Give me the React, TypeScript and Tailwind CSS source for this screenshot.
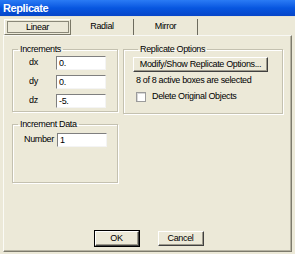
const font = "font-['Liberation_Sans',Arial,sans-serif]";
const txt = 'text-[9px] tracking-[-0.35px] text-black';

function Field({ value }: { value: string }) {
  return (
    <div
      className={`w-[50px] h-[14px] bg-white border-t border-l border-t-[#7f7f7f] border-l-[#7f7f7f] border-b border-r border-b-[#f4f4f4] border-r-[#f4f4f4] leading-[12px] pl-[2px] ${txt}`}
    >
      {value}
    </div>
  );
}

function Group({
  title,
  className,
  children,
}: {
  title: string;
  className: string;
  children: React.ReactNode;
}) {
  return (
    <fieldset
      className={`border border-[#c4c1b0] shadow-[inset_1px_1px_0_#fff,1px_1px_0_#fff] ${className}`}
    >
      <legend className={`ml-[5px] px-[2px] leading-[10px] whitespace-nowrap ${txt}`}>{title}</legend>
      {children}
    </fieldset>
  );
}

function Button({ label, className }: { label: string; className: string }) {
  return (
    <div
      className={`h-[15px] flex items-center justify-center whitespace-nowrap border border-t-white border-l-white border-b-[#404040] border-r-[#404040] shadow-[inset_-1px_-1px_0_#9d9a8c] bg-[#ECE9D8] ${txt} ${className}`}
    >
      {label}
    </div>
  );
}

export default function App() {
  return (
    <div className={`w-[295px] h-[254px] bg-[#ECE9D8] flex flex-col ${font}`}>
      {/* title bar */}
      <div className="h-[16px] bg-gradient-to-b from-[#2a7bf5] via-[#0756e0] to-[#0645c8] flex items-center pl-[3px]">
        <span className="text-white font-bold text-[11px] tracking-[-0.4px] leading-none">Replicate</span>
      </div>
      <div className="h-px bg-[#e4e2d4]" />

      {/* tabs */}
      <div className="flex pl-[4px] mt-[2px] h-[16px] items-stretch">
        <div className={`w-[67px] border border-t-white border-l-white border-b-[#7a7867] border-r-[#7a7867] bg-[#ECE9D8] flex items-center justify-center ${txt}`}>
          <div className="w-[62px] h-[12px] border border-[#8a8878] flex items-center justify-center leading-none">
            Linear
          </div>
        </div>
        <div className={`w-[63px] flex items-center justify-center border-r border-r-[#6d6b5e] ${txt}`}>
          Radial
        </div>
        <div className={`w-[64px] flex items-center justify-center border-r border-r-[#6d6b5e] ${txt}`}>
          Mirror
        </div>
      </div>

      {/* panel */}
      <div className="flex-1 mx-[3px] mb-[2px] border border-t-[#f8f8f4] border-l-[#fbfbf6] border-r-[#7c7a6c] border-b-[#7c7a6c] shadow-[inset_-1px_-1px_0_#b6b3a2] flex flex-col pt-[8px]">
        <div className="flex gap-[5px] pl-[8px]">
          <div className="flex flex-col">
            <Group title="Increments" className="w-[106px] h-[68px] pt-[2px]">
              <div className="flex flex-col gap-[5px]">
                {[
                  ['dx', '0.'],
                  ['dy', '0.'],
                  ['dz', '-5.'],
                ].map(([l, v]) => (
                  <div key={l} className="flex items-center">
                    <span className={`w-[43px] pl-[16px] ${txt}`}>{l}</span>
                    <Field value={v} />
                  </div>
                ))}
              </div>
            </Group>
            <Group title="Increment Data" className="w-[106px] h-[64px] mt-[7px] pt-[4px]">
              <div className="flex items-center">
                <span className={`w-[44px] pl-[11px] whitespace-nowrap ${txt}`}>Number</span>
                <Field value="1" />
              </div>
            </Group>
          </div>
          <Group title="Replicate Options" className="w-[160px] h-[70px] pl-[9px] pt-[3px]">
            <Button label="Modify/Show Replicate Options..." className="w-[135px]" />
            <div className={`mt-[2px] pl-[3px] leading-[12px] whitespace-nowrap ${txt}`}>
              8 of 8 active boxes are selected
            </div>
            <div className="flex items-center mt-[4px] pl-[3px] gap-[6px]">
              <div className="w-[10px] h-[10px] bg-white border border-[#9b9b9b] shadow-[inset_1px_1px_0_#d8d8d8]" />
              <span className={`whitespace-nowrap ${txt}`}>Delete Original Objects</span>
            </div>
          </Group>
        </div>
        <div className="flex-1" />
        <div className="flex justify-center gap-[19px] pl-[3px] mb-[5px]">
          <Button label="OK" className="w-[44px] outline outline-1 outline-black" />
          <Button label="Cancel" className="w-[46px]" />
        </div>
      </div>
    </div>
  );
}
